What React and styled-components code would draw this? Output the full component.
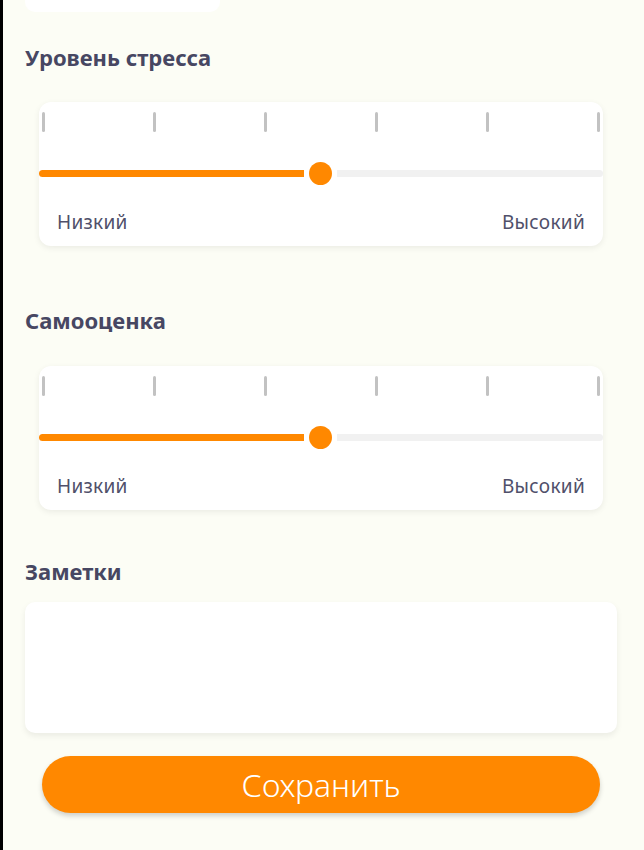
import React, {useState} from 'react';
import styled, {createGlobalStyle} from 'styled-components';

const GlobalStyle = createGlobalStyle`
  html, body {
    margin: 0;
    padding: 0;
    background: #fcfdf5;
  }
  body {
    font-family: "Noto Sans", "Open Sans", sans-serif;
  }
`;

const Page = styled.div`
  min-height: 850px;
  box-sizing: border-box;
  border-left: 3px solid #000;
  background: #fcfdf5;
  padding: 0 27px 0 22px;
  display: flex;
  flex-direction: column;
`;

const TopCard = styled.div`
  width: 195px;
  height: 12px;
  background: #fff;
  border-radius: 0 0 10px 10px;
`;

const Title = styled.h2`
  margin: ${p => p.$top}px 0 0;
  font-size: 22px;
  line-height: 30px;
  font-weight: 700;
  color: #474762;
`;

const SliderCard = styled.div`
  margin: ${p => p.$top}px 14px 0;
  background: #fff;
  border-radius: 12px;
  box-shadow: 0 2px 6px rgba(0, 0, 0, 0.07);
  padding: 10px 0 11px;
  display: flex;
  flex-direction: column;
`;

const Ticks = styled.div`
  display: flex;
  justify-content: space-between;
  padding: 0 3px;
`;

const Tick = styled.span`
  width: 3px;
  height: 20px;
  border-radius: 2px;
  background: #c2c2c2;
`;

const Track = styled.div`
  margin-top: 29px;
  height: 24px;
  display: flex;
  align-items: center;
`;

const Active = styled.div`
  height: 7px;
  background: #ff8800;
  border-radius: 4px 0 0 4px;
`;

const Thumb = styled.div`
  width: 23px;
  height: 23px;
  margin: 0 5px;
  border-radius: 50%;
  background: #ff8800;
  flex-shrink: 0;
`;

const Inactive = styled.div`
  flex: 1;
  height: 7px;
  background: #f1f1f1;
  border-radius: 0 4px 4px 0;
`;

const Labels = styled.div`
  margin-top: 24px;
  padding: 0 18px;
  display: flex;
  justify-content: space-between;
  font-size: 19px;
  line-height: 26px;
  letter-spacing: 0.3px;
  color: #50506a;
`;

const NotesBox = styled.textarea`
  margin-top: 16.5px;
  height: 131px;
  box-sizing: border-box;
  border: none;
  outline: none;
  resize: none;
  background: #fff;
  border-radius: 10px;
  box-shadow: 0 3px 6px rgba(0, 0, 0, 0.07);
  padding: 12px 16px;
  font-family: inherit;
  font-size: 17px;
  color: #474762;
`;

const SaveButton = styled.button`
  margin: 23px 17px 0;
  height: 57px;
  border: none;
  border-radius: 29px;
  background: #ff8800;
  color: #fff;
  font-family: inherit;
  font-size: 32px;
  font-weight: 300;
  box-shadow: 0 3px 5px rgba(0, 0, 0, 0.18);
  cursor: pointer;
`;

const Slider = ({value, top}) => (
  <SliderCard $top={top}>
    <Ticks>
      {[0, 1, 2, 3, 4, 5].map(i => <Tick key={i}/>)}
    </Ticks>
    <Track>
      <Active style={{width: `calc(${value}% - 17px)`}}/>
      <Thumb/>
      <Inactive/>
    </Track>
    <Labels>
      <span>Низкий</span>
      <span>Высокий</span>
    </Labels>
  </SliderCard>
);

const App = () => {
    const [notes, setNotes] = useState('');

    return (
        <>
            <GlobalStyle/>
            <Page>
                <TopCard/>
                <Title $top={29.5}>Уровень стресса</Title>
                <Slider value={50} top={30.5}/>
                <Title $top={58.5}>Самооценка</Title>
                <Slider value={50} top={31.5}/>
                <Title $top={45.5}>Заметки</Title>
                <NotesBox value={notes} onChange={e => setNotes(e.target.value)}/>
                <SaveButton>Сохранить</SaveButton>
            </Page>
        </>
    );
};

export default App;
